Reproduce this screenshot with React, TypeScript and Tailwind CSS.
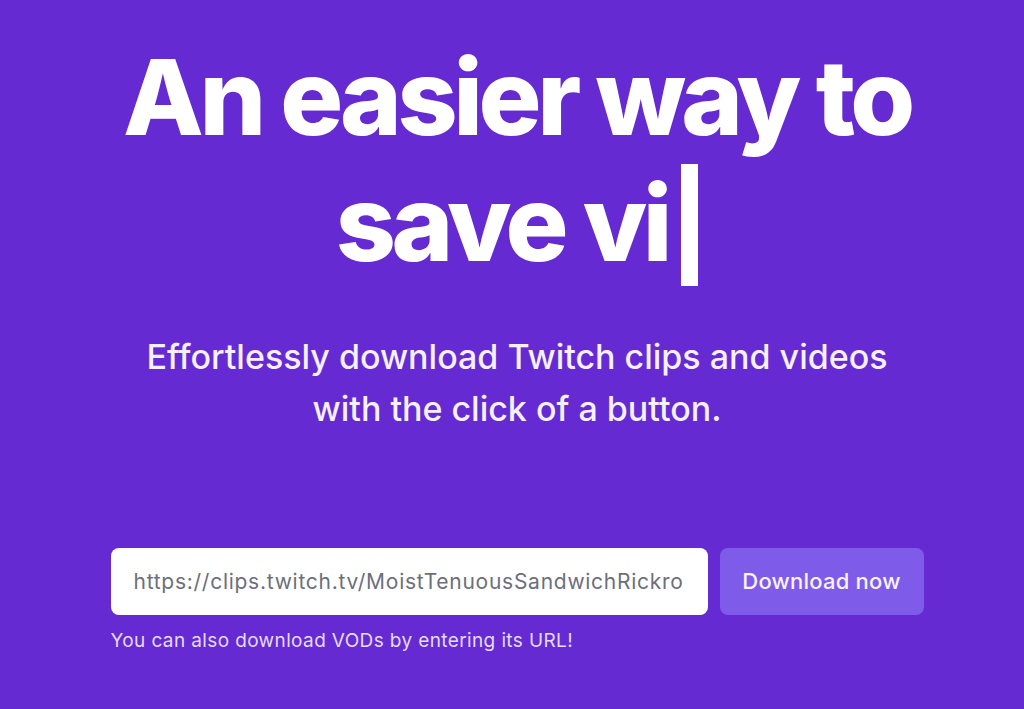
export default function App() {
  return (
    <div
      className="min-h-screen w-full bg-[#652ad2] text-white"
      style={{ fontFamily: "Inter, 'Noto Sans', sans-serif" }}
    >
      <div className="mx-auto flex w-full flex-col items-center pl-[10px] pt-[34px]">
        {/* Headline with typing cursor */}
        <h1 className="whitespace-nowrap text-center text-[105px] font-extrabold leading-[126px] tracking-[-0.042em]">
          An easier way to
          <br />
          save vi
          <span className="relative ml-[13px] inline-block h-[60px] w-[17px] align-baseline">
            <span className="absolute bottom-[-25px] left-0 h-[122px] w-[17px] bg-white" />
          </span>
        </h1>

        <p className="mt-[45px] text-center text-[34px] font-medium leading-[52px] text-[#f5f0ff]">
          Effortlessly download Twitch clips and videos
          <br />
          with the click of a button.
        </p>

        {/* URL form */}
        <div className="mt-[113px] w-[813px]">
          <div className="flex gap-3">
            <input
              type="text"
              defaultValue="https://clips.twitch.tv/MoistTenuousSandwichRickro"
              className="h-[67px] min-w-0 flex-1 rounded-lg bg-white pl-[23px] pr-4 text-[21px] tracking-[0.035em] text-[#6b6f7b] outline-none"
            />
            <button className="h-[67px] w-[204px] rounded-lg bg-[#7f5be9] text-[22px] font-medium tracking-[0.01em] text-[#f7f3ff]">
              Download now
            </button>
          </div>
          <p className="mt-[12px] text-[19px] tracking-[0.02em] text-[#e6dcff]">
            You can also download VODs by entering its URL!
          </p>
        </div>
      </div>
    </div>
  );
}
